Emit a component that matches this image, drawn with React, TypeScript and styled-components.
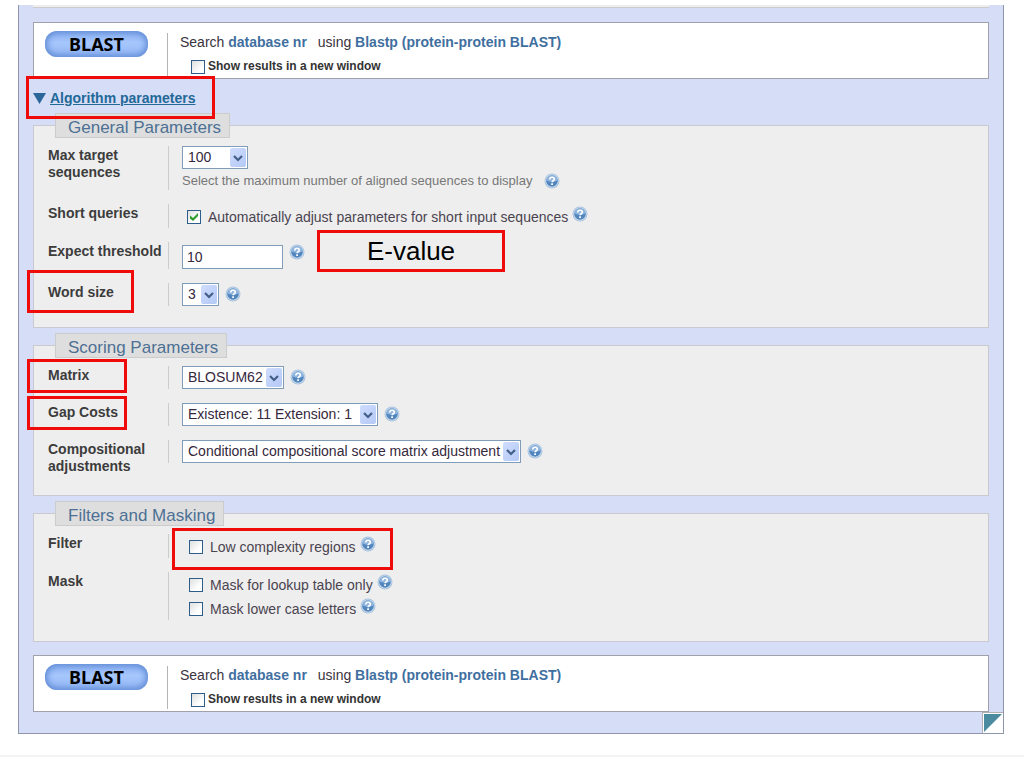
import React, { ReactNode } from "react";
import styled, { createGlobalStyle } from "styled-components";

const GlobalStyle = createGlobalStyle`
  *, *::before, *::after { box-sizing: border-box; }
  body {
    margin: 0;
    background: #fff;
    color: #333;
    font: 14px/17px "Liberation Sans", Arial, sans-serif;
  }
`;

const Page = styled.main`
  padding-top: 5px;
`;

const Panel = styled.form`
  position: relative;
  margin: 0 20px 0 18px;
  padding: 0 14px 21px;
  background: #d6ddf7;
  border: 1px solid #8e96ac;
  border-top: 0;
`;

const PreviousSection = styled.div`
  height: 3px;
  margin-bottom: 14px;
  background: #eee;
  border-bottom: 1px solid #ccc;
`;

const SearchBox = styled.section`
  display: flex;
  align-items: flex-start;
  height: 57px;
  padding: 8px 11px 0;
  background: #fff;
  border: 1px solid #a0a1ab;
`;

const BottomSearch = styled.div`
  padding-top: 8px;
`;

const BlastButton = styled.button`
  width: 103px;
  height: 26px;
  margin-right: 19px;
  padding: 0;
  border: 0;
  border-radius: 12px;
  background: linear-gradient(#8fb4f4, #a6c6fc 45%, #94b7f5);
  box-shadow: inset 0 0 6px 2px #5f8ad4;
  color: #000;
  font: bold 18px/26px "Noto Sans", "Open Sans", sans-serif;
`;

const SearchText = styled.div`
  height: 43px;
  margin-top: 2px;
  padding: 1px 0 0 12px;
  border-left: 1px solid #b4b4b4;
`;

const Summary = styled.p`
  margin: 0 0 7px;
  color: #3a3340;

  strong {
    color: #3f6f9f;
  }

  span {
    margin-left: 7px;
  }
`;

const WindowOption = styled.label`
  display: flex;
  align-items: center;
  gap: 3px;
  padding-left: 11px;
  font-size: 12px;
  font-weight: bold;
`;

const Checkbox = styled.input.attrs({ type: "checkbox" })`
  appearance: none;
  display: grid;
  place-items: center;
  flex: none;
  width: 14px;
  height: 14px;
  margin: 0;
  border: 1px solid #2d5d8a;
  background: linear-gradient(135deg, #dedfdf, #fff 70%);

  &:checked::before {
    content: "";
    width: 8px;
    height: 8px;
    background: #2a9c2a;
    clip-path: polygon(0 30%, 38% 62%, 100% 0, 100% 38%, 38% 100%, 0 68%);
  }
`;

const Toggle = styled.div`
  display: flex;
  padding: 11px 0 6px;
`;

const ToggleLink = styled.a`
  display: flex;
  align-items: center;
  gap: 4px;
  color: #226997;
  font-weight: bold;
  text-decoration: none;

  span {
    text-decoration: underline;
  }
`;

const Marked = styled.span`
  position: relative;
`;

const Mark = styled.span<{ $top: number; $right: number; $bottom: number; $left: number }>`
  position: absolute;
  z-index: 1;
  top: -${(p) => p.$top}px;
  right: -${(p) => p.$right}px;
  bottom: -${(p) => p.$bottom}px;
  left: -${(p) => p.$left}px;
  border: 3px solid #f00b0b;
  pointer-events: none;
`;

const Group = styled.fieldset`
  min-width: 0;
  margin: 0 0 5px;
  padding: 8px 14px 21px;
  background: #eee;
  border: 1px solid #c9c9cf;
`;

const GroupTitle = styled.legend`
  height: 25px;
  margin-left: 7px;
  padding: 3px 8px 0 12px;
  background: #dedede;
  border: 1px solid #ccc;
  color: #4d7094;
  font-size: 17px;
  line-height: 22px;
`;

const Rows = styled.div`
  display: grid;
  gap: 14px;
`;

const Row = styled.div`
  display: grid;
  grid-template-columns: 120px 1fr;
  align-items: start;
`;

const RowLabel = styled.label`
  margin: 1px 0 -1px;
  color: #3c3c3c;
  font-weight: bold;
`;

const Control = styled.div`
  display: grid;
  gap: 2px;
  padding-left: 13px;
  border-left: 1px solid #ccc;
`;

const Line = styled.div`
  display: flex;
  align-items: center;
  gap: 6px;
`;

const Hint = styled(Line)`
  gap: 12px;
  height: 19px;
  color: #777;
  font-size: 13px;
`;

const CheckLine = styled.div<{ $indent: number }>`
  display: flex;
  align-items: center;
  gap: 4px;
  height: 22px;
  padding-left: ${(p) => p.$indent}px;
  color: #4a4450;
`;

const Checks = styled(Control)`
  padding-top: 2px;
`;

const CheckLabel = styled.label`
  display: flex;
  align-items: center;
  gap: 7px;
`;

const MarkedCheck = styled.div`
  position: relative;
  justify-self: start;
`;

const SelectBox = styled.span<{ $width: number }>`
  display: inline-grid;
  align-items: center;
  width: ${(p) => p.$width}px;

  > * {
    grid-area: 1 / 1;
  }
`;

const SelectInput = styled.select`
  appearance: none;
  width: 100%;
  height: 23px;
  margin: 0;
  padding: 0 0 0 5px;
  border: 1px solid #7f9db9;
  border-radius: 0;
  background: #fff;
  color: #35283c;
  font: inherit;
`;

const Arrow = styled.span`
  display: grid;
  place-items: center;
  justify-self: end;
  width: 16px;
  height: 19px;
  margin-right: 2px;
  border-radius: 2px;
  background: linear-gradient(135deg, #cfdcfd, #b4c9f6);
  pointer-events: none;
`;

const ThresholdLine = styled(Line)`
  height: 27px;
  align-items: flex-end;
`;

const TextInput = styled.input`
  width: 101px;
  height: 24px;
  padding: 0 4px;
  border: 1px solid #7f9db9;
  background: #fff;
  color: #35283c;
  font: inherit;
`;

const Help = styled.button<{ $raised?: number }>`
  display: flex;
  flex: none;
  margin: 0 0 ${(p) => p.$raised ?? 2}px;
  padding: 0;
  border: 0;
  background: none;
`;

const ValueNote = styled.div`
  align-self: center;
  width: 188px;
  margin: -22px 0 -12px 6px;
  border: 3px solid #f00b0b;
  color: #000;
  font-size: 26px;
  line-height: 36px;
  text-align: center;
`;

const Corner = styled.div`
  position: absolute;
  right: 0;
  bottom: 0;
  width: 21px;
  height: 21px;
  padding: 1px;
  background: #fff;
  border: solid #b0b0b4;
  border-width: 1px 0 0 1px;
`;

const Footer = styled.hr`
  height: 2px;
  margin: 21px 0 0;
  border: 0;
  background: #f3f3f3;
`;

function HelpIcon({ topic, raised }: { topic: string; raised?: number }) {
  return (
    <Help type="button" aria-label={`Help: ${topic}`} $raised={raised}>
      <svg width="16" height="16" viewBox="0 0 16 16">
        <circle cx="8" cy="8" r="7.5" fill="#a9c3df" />
        <circle cx="8" cy="8" r="6.5" fill="#d3e2f2" />
        <circle cx="8" cy="8" r="5.8" fill="#5286bd" />
        <path d="M2.600 7.500a5.400 5 0 0 1 10.800 0q-5.400 2.500-10.800 0z" fill="#8fb5df" />
        <path
          d="M5.800 6.400c0-3 4.500-2.800 4.500-.2 0 1.600-2.200 1.500-2.200 3"
          fill="none"
          stroke="#fff"
          strokeWidth="1.6"
        />
        <rect x="7.200" y="10.300" width="1.800" height="1.700" fill="#fff" />
      </svg>
    </Help>
  );
}

function Select({ id, width, value }: { id: string; width: number; value: string }) {
  return (
    <SelectBox $width={width}>
      <SelectInput id={id} defaultValue={value}>
        <option>{value}</option>
      </SelectInput>
      <Arrow>
        <svg width="10" height="8" viewBox="0 0 10 8">
          <path d="M1 2l4 4 4-4" fill="none" stroke="#435f88" strokeWidth="2.2" />
        </svg>
      </Arrow>
    </SelectBox>
  );
}

function Search() {
  return (
    <SearchBox>
      <BlastButton type="button">BLAST</BlastButton>
      <SearchText>
        <Summary>
          Search <strong>database nr</strong> <span>using</span>{" "}
          <strong>Blastp (protein-protein BLAST)</strong>
        </Summary>
        <WindowOption>
          <Checkbox />
          Show results in a new window
        </WindowOption>
      </SearchText>
    </SearchBox>
  );
}

function Check({
  label,
  indent = 7,
  checked = false,
  mark,
}: {
  label: string;
  indent?: number;
  checked?: boolean;
  mark?: ReactNode;
}) {
  return (
    <CheckLine $indent={indent}>
      <CheckLabel>
        <Checkbox defaultChecked={checked} />
        {label}
      </CheckLabel>
      <HelpIcon topic={label} raised={6} />
      {mark}
    </CheckLine>
  );
}

export default function App() {
  return (
    <Page>
      <GlobalStyle />
      <Panel>
        <PreviousSection />
        <Search />
        <Toggle>
          <Marked>
            <ToggleLink href="#parameters">
              <svg width="13" height="11" viewBox="0 0 13 11">
                <path d="M0 0h13L6.500 11z" fill="#2b669b" />
              </svg>
              <span>Algorithm parameters</span>
            </ToggleLink>
            <Mark $top={14} $right={20} $bottom={12} $left={7} />
          </Marked>
        </Toggle>

        <Group id="parameters">
          <GroupTitle>General Parameters</GroupTitle>
          <Rows>
            <Row>
              <RowLabel htmlFor="max">
                Max target
                <br />
                sequences
              </RowLabel>
              <Control>
                <Line>
                  <Select id="max" width={66} value="100" />
                </Line>
                <Hint>
                  Select the maximum number of aligned sequences to display
                  <HelpIcon topic="Max target sequences" raised={0} />
                </Hint>
              </Control>
            </Row>
            <Row>
              <RowLabel as="span">Short queries</RowLabel>
              <Checks>
                <Check
                  label="Automatically adjust parameters for short input sequences"
                  indent={5}
                  checked
                />
              </Checks>
            </Row>
            <Row>
              <RowLabel htmlFor="expect">Expect threshold</RowLabel>
              <Control>
                <ThresholdLine>
                  <TextInput id="expect" defaultValue="10" />
                  <HelpIcon topic="Expect threshold" raised={9} />
                  <ValueNote>E-value</ValueNote>
                </ThresholdLine>
              </Control>
            </Row>
            <Row>
              <RowLabel htmlFor="word">
                <Marked>
                  Word size
                  <Mark $top={14} $right={20} $bottom={13} $left={21} />
                </Marked>
              </RowLabel>
              <Control>
                <Line>
                  <Select id="word" width={37} value="3" />
                  <HelpIcon topic="Word size" />
                </Line>
              </Control>
            </Row>
          </Rows>
        </Group>

        <Group>
          <GroupTitle>Scoring Parameters</GroupTitle>
          <Rows>
            <Row>
              <RowLabel htmlFor="matrix">
                <Marked>
                  Matrix
                  <Mark $top={8} $right={38} $bottom={10} $left={21} />
                </Marked>
              </RowLabel>
              <Control>
                <Line>
                  <Select id="matrix" width={102} value="BLOSUM62" />
                  <HelpIcon topic="Matrix" />
                </Line>
              </Control>
            </Row>
            <Row>
              <RowLabel htmlFor="gap">
                <Marked>
                  Gap Costs
                  <Mark $top={8} $right={9} $bottom={10} $left={21} />
                </Marked>
              </RowLabel>
              <Control>
                <Line>
                  <Select id="gap" width={196} value="Existence: 11 Extension: 1" />
                  <HelpIcon topic="Gap Costs" />
                </Line>
              </Control>
            </Row>
            <Row>
              <RowLabel htmlFor="adjust">
                Compositional
                <br />
                adjustments
              </RowLabel>
              <Control>
                <Line>
                  <Select
                    id="adjust"
                    width={339}
                    value="Conditional compositional score matrix adjustment"
                  />
                  <HelpIcon topic="Compositional adjustments" />
                </Line>
              </Control>
            </Row>
          </Rows>
        </Group>

        <Group>
          <GroupTitle>Filters and Masking</GroupTitle>
          <Rows>
            <Row>
              <RowLabel as="span">Filter</RowLabel>
              <Checks>
                <MarkedCheck>
                  <Check
                    label="Low complexity regions"
                    mark={<Mark $top={8} $right={17} $bottom={12} $left={10} />}
                  />
                </MarkedCheck>
              </Checks>
            </Row>
            <Row>
              <RowLabel as="span">Mask</RowLabel>
              <Checks>
                <Check label="Mask for lookup table only" />
                <Check label="Mask lower case letters" />
              </Checks>
            </Row>
          </Rows>
        </Group>

        <BottomSearch>
          <Search />
        </BottomSearch>
        <Corner>
          <svg width="18" height="18" viewBox="0 0 18 18">
            <path d="M0 0h18L0 18z" fill="#4a8b9f" />
          </svg>
        </Corner>
      </Panel>
      <Footer />
    </Page>
  );
}
